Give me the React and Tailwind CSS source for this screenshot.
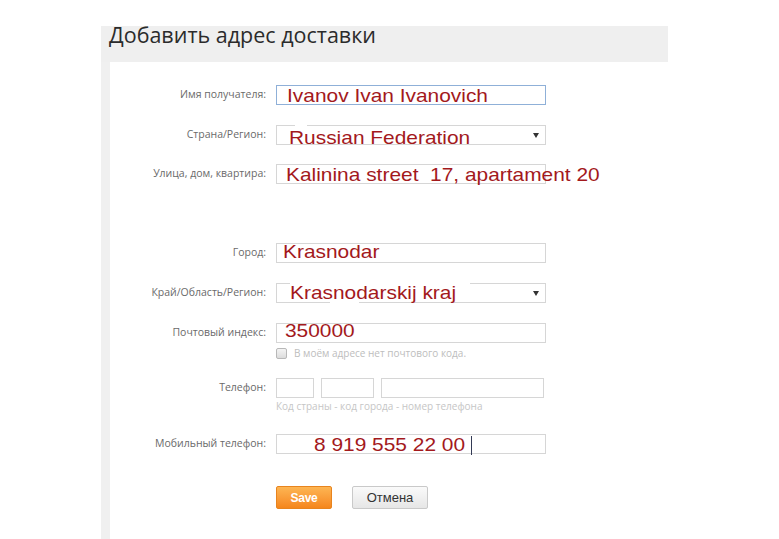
import React from "react";

const labelCls = "w-[166px] shrink-0 pr-[10px] text-right text-[10.5px] text-[#6a6a6a]";
const boxCls = "relative h-[20px] w-[270px] border border-[#d6d6d6] bg-white";
const redCls =
  "absolute whitespace-nowrap leading-none text-[19px] text-[#a3191c] scale-x-110 origin-left font-['Liberation_Sans',Arial,sans-serif]";

function Arrow() {
  return (
    <svg className="absolute right-[6px] top-[7px]" width="6" height="5" viewBox="0 0 6 5">
      <path d="M0 0 L6 0 L3 5 Z" fill="#333" />
    </svg>
  );
}

function Row({ label, className = "", children }) {
  return (
    <div className={`flex items-center ${className}`}>
      <div className={labelCls}>{label}</div>
      {children}
    </div>
  );
}

export default function App() {
  return (
    <div className="h-[539px] w-[779px] overflow-hidden bg-white pt-[26px] font-['Open_Sans',sans-serif]">
      <div className="ml-[101px] w-[567px]">
        {/* Header */}
        <div className="h-[36px] bg-[#efefef] pl-[8px]">
          <h1 className="text-[21.5px] font-normal leading-[18px] text-[#2b2b2b]">Добавить адрес доставки</h1>
        </div>

        <div className="flex h-[477px]">
          <div className="w-[9px] shrink-0 bg-[#f0f0f0]" />
          <div className="flex flex-1 flex-col pt-[23px]">
            <Row label="Имя получателя:">
              <div className={`${boxCls} !border-[#8fb0d8]`}>
                <span className={`${redCls} left-[10px] top-0`}>Ivanov Ivan Ivanovich</span>
              </div>
            </Row>

            <Row label="Страна/Регион:" className="mt-[20px]">
              <div className={boxCls}>
                <div className="absolute left-[18px] top-[-1px] h-[2px] w-[12px] bg-white" />
                <span className={`${redCls} left-[12px] top-[2px]`}>Russian Federation</span>
                <Arrow />
              </div>
            </Row>

            <Row label="Улица, дом, квартира:" className="mt-[19px]">
              <div className={boxCls}>
                <span className={`${redCls} left-[9px] top-0`}>Kalinina street&nbsp;&nbsp;17, apartament 20</span>
              </div>
            </Row>

            <Row label="Город:" className="mt-[59px]">
              <div className={boxCls}>
                <span className={`${redCls} left-[6px] top-[-2px]`}>Krasnodar</span>
              </div>
            </Row>

            <Row label="Край/Область/Регион:" className="mt-[20px]">
              <div className={boxCls}>
                <div className="absolute left-[13px] top-[-1px] h-[2px] w-[180px] bg-white" />
                <div className="absolute bottom-[-1px] left-[53px] h-[2px] w-[29px] bg-white" />
                <span className={`${redCls} left-[13px] top-[-1px]`}>Krasnodarskij kraj</span>
                <Arrow />
              </div>
            </Row>

            <Row label="Почтовый индекс:" className="mt-[20px]">
              <div className={boxCls}>
                <span className={`${redCls} left-[8px] top-[-3px]`}>350000</span>
              </div>
            </Row>

            <div className="ml-[166px] mt-[4px] flex items-center gap-[7px]">
              <div className="h-[11px] w-[11px] rounded-[2px] border border-[#b8b8b8] bg-gradient-to-b from-[#f4f4f4] to-[#dcdcdc]" />
              <span className="text-[10px] leading-[12px] text-[#bdbdbd]">В моём адресе нет почтового кода.</span>
            </div>

            <Row label="Телефон:" className="mt-[19px]">
              <div className="flex gap-[7px]">
                <div className="h-[20px] w-[38px] border border-[#d6d6d6]" />
                <div className="h-[20px] w-[53px] border border-[#d6d6d6]" />
                <div className="h-[20px] w-[163px] border border-[#d6d6d6]" />
              </div>
            </Row>
            <div className="ml-[166px] mt-[2px] text-[10px] leading-[13px] text-[#c6c6c6]">
              Код страны - код города - номер телефона
            </div>

            <Row label="Мобильный телефон:" className="mt-[21px]">
              <div className={boxCls}>
                <span className={`${redCls} left-[37px] top-0`}>8 919 555 22 00</span>
                <div className="absolute left-[194px] top-[1px] h-[19px] w-px bg-[#333a55]" />
              </div>
            </Row>

            <div className="ml-[166px] mt-[32px] flex gap-[20px]">
              <button className="h-[23px] w-[56px] rounded-[2px] border border-[#e8841e] bg-gradient-to-b from-[#fdb552] to-[#f5861a] text-[12px] font-bold tracking-tight text-white font-['Liberation_Sans_Narrow','Liberation_Sans',sans-serif]">
                Save
              </button>
              <button className="h-[23px] w-[76px] rounded-[2px] border border-[#c9c9c9] bg-gradient-to-b from-[#fafafa] to-[#e6e6e6] text-[13px] text-[#333] font-['Liberation_Sans',sans-serif]">
                Отмена
              </button>
            </div>
          </div>
        </div>
      </div>
    </div>
  );
}
